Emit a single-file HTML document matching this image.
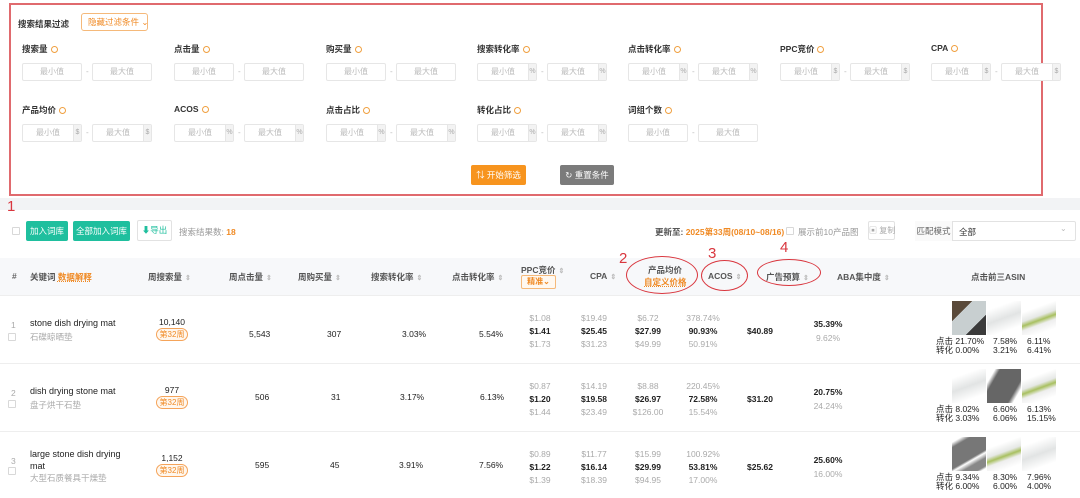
<!DOCTYPE html><html><head><meta charset="utf-8"><style>
*{margin:0;padding:0;box-sizing:border-box}
body{width:1080px;height:498px;overflow:hidden;background:#fff;font-family:"Liberation Sans","Noto Sans CJK SC",sans-serif;color:#333;position:relative;font-size:9px}
.a{position:absolute;white-space:nowrap}
.lbl{font-size:8.5px;color:#333;font-weight:bold}
.q{display:inline-block;width:7px;height:7px;border:1px solid #f0a040;border-radius:50%;margin-left:3px;vertical-align:-1px}
.in{position:absolute;width:60px;height:18px;border:1px solid #e6e6e6;border-radius:2px;color:#bbb;font-size:8px;line-height:16px;text-align:center;background:#fff}
.in.u{padding-right:8px}
.in .s{position:absolute;right:0;top:0;width:8px;height:16px;background:#f3f3f3;color:#aaa;font-size:7px;text-align:center;border-left:1px solid #e6e6e6}
.d{position:absolute;color:#bbb;font-size:8px}
.h{font-size:8.5px;color:#555;font-weight:bold}
.ar{display:inline-block;color:#bbb;font-size:7px;margin-left:3px}
.g{color:#aaa;font-size:8.5px}
.b{color:#222;font-size:8.5px;font-weight:bold}
.c{text-align:center;width:60px}
.tag{display:inline-block;border:1px solid #f5a45a;border-radius:7px;color:#f08a24;font-size:8px;padding:0 3px;line-height:11px;background:#fff7ee}
.ell{position:absolute;border:1.5px solid #d9363e;border-radius:50%}
.rn{position:absolute;color:#d9363e;font-size:15px;font-family:"Liberation Sans",sans-serif}
.cb{position:absolute;width:8px;height:8px;border:1px solid #d8d8d8;border-radius:1px;background:#fff}
.img{position:absolute;width:34px;height:34px}
</style></head><body>
<div class="a" style="left:0;top:0;width:1080px;height:205px;background:#fff"></div>
<div class="a" style="left:0;top:198px;width:1080px;height:12px;background:#f2f3f5"></div>
<div class="a" style="left:9px;top:3px;width:1034px;height:193px;border:2px solid #e06a6e"></div>
<div class="a lbl" style="left:18px;top:18px">搜索结果过滤</div>
<div class="a" style="left:81px;top:13px;width:67px;height:18px;border:1px solid #f5b97a;border-radius:3px;color:#f08a24;font-size:8.5px;line-height:16px;padding-left:6px">隐藏过滤条件 ⌄</div>

<div class="a lbl" style="left:22px;top:43px">搜索量<span class="q"></span></div>
<div class="a lbl" style="left:174px;top:43px">点击量<span class="q"></span></div>
<div class="a lbl" style="left:326px;top:43px">购买量<span class="q"></span></div>
<div class="a lbl" style="left:477px;top:43px">搜索转化率<span class="q"></span></div>
<div class="a lbl" style="left:628px;top:43px">点击转化率<span class="q"></span></div>
<div class="a lbl" style="left:780px;top:43px">PPC竞价<span class="q"></span></div>
<div class="a lbl" style="left:931px;top:43px">CPA<span class="q"></span></div>
<div class="in" style="left:22px;top:63px">最小值</div><div class="d" style="left:86px;top:67px">-</div><div class="in" style="left:92px;top:63px">最大值</div>
<div class="in" style="left:174px;top:63px">最小值</div><div class="d" style="left:238px;top:67px">-</div><div class="in" style="left:244px;top:63px">最大值</div>
<div class="in" style="left:326px;top:63px">最小值</div><div class="d" style="left:390px;top:67px">-</div><div class="in" style="left:396px;top:63px">最大值</div>
<div class="in u" style="left:477px;top:63px">最小值<span class="s">%</span></div><div class="d" style="left:541px;top:67px">-</div><div class="in u" style="left:547px;top:63px">最大值<span class="s">%</span></div>
<div class="in u" style="left:628px;top:63px">最小值<span class="s">%</span></div><div class="d" style="left:692px;top:67px">-</div><div class="in u" style="left:698px;top:63px">最大值<span class="s">%</span></div>
<div class="in u" style="left:780px;top:63px">最小值<span class="s">$</span></div><div class="d" style="left:844px;top:67px">-</div><div class="in u" style="left:850px;top:63px">最大值<span class="s">$</span></div>
<div class="in u" style="left:931px;top:63px">最小值<span class="s">$</span></div><div class="d" style="left:995px;top:67px">-</div><div class="in u" style="left:1001px;top:63px">最大值<span class="s">$</span></div>
<div class="a lbl" style="left:22px;top:104px">产品均价<span class="q"></span></div>
<div class="a lbl" style="left:174px;top:104px">ACOS<span class="q"></span></div>
<div class="a lbl" style="left:326px;top:104px">点击占比<span class="q"></span></div>
<div class="a lbl" style="left:477px;top:104px">转化占比<span class="q"></span></div>
<div class="a lbl" style="left:628px;top:104px">词组个数<span class="q"></span></div>
<div class="in u" style="left:22px;top:124px">最小值<span class="s">$</span></div><div class="d" style="left:86px;top:128px">-</div><div class="in u" style="left:92px;top:124px">最大值<span class="s">$</span></div>
<div class="in u" style="left:174px;top:124px">最小值<span class="s">%</span></div><div class="d" style="left:238px;top:128px">-</div><div class="in u" style="left:244px;top:124px">最大值<span class="s">%</span></div>
<div class="in u" style="left:326px;top:124px">最小值<span class="s">%</span></div><div class="d" style="left:390px;top:128px">-</div><div class="in u" style="left:396px;top:124px">最大值<span class="s">%</span></div>
<div class="in u" style="left:477px;top:124px">最小值<span class="s">%</span></div><div class="d" style="left:541px;top:128px">-</div><div class="in u" style="left:547px;top:124px">最大值<span class="s">%</span></div>
<div class="in" style="left:628px;top:124px">最小值</div><div class="d" style="left:692px;top:128px">-</div><div class="in" style="left:698px;top:124px">最大值</div>
<div class="a" style="left:471px;top:165px;width:55px;height:20px;background:#f7941e;border-radius:2px;color:#fff;font-size:8.5px;line-height:20px;text-align:center">⇅ 开始筛选</div>
<div class="a" style="left:560px;top:165px;width:54px;height:20px;background:#7b7b7b;border-radius:2px;color:#fff;font-size:8.5px;line-height:20px;text-align:center">↻ 重置条件</div>

<div class="rn" style="left:7px;top:198px">1</div>
<div class="cb" style="left:12px;top:227px"></div>
<div class="a" style="left:26px;top:221px;width:42px;height:20px;background:#1fbf9e;border-radius:2px;color:#fff;font-size:8.5px;line-height:20px;text-align:center">加入词库</div>
<div class="a" style="left:73px;top:221px;width:57px;height:20px;background:#1fbf9e;border-radius:2px;color:#fff;font-size:8.5px;line-height:20px;text-align:center">全部加入词库</div>
<div class="a" style="left:137px;top:220px;width:35px;height:21px;border:1px solid #e2e2e2;border-radius:2px;color:#1fbf9e;font-size:8.5px;line-height:19px;text-align:center">⬇导出</div>
<div class="a" style="left:179px;top:226px;font-size:8.5px;color:#999">搜索结果数: <b style="color:#f08a24">18</b></div>
<div class="a" style="left:655px;top:226px;font-size:8.5px;color:#555;font-weight:bold">更新至: <span style="color:#f08a24">2025第33周(08/10~08/16)</span></div>
<div class="cb" style="left:786px;top:227px"></div>
<div class="a" style="left:798px;top:226px;font-size:8.5px;color:#999">展示前10产品图</div>
<div class="a" style="left:868px;top:221px;width:27px;height:19px;border:1px solid #e2e2e2;border-radius:2px;color:#aaa;font-size:8px;line-height:17px;text-align:center">▣ 复制</div>
<div class="a" style="left:915px;top:221px;width:161px;height:20px;border:1px solid #e2e2e2;border-radius:2px"></div>
<div class="a" style="left:915px;top:221px;width:38px;height:20px;border-right:1px solid #e2e2e2;background:#fafafa;font-size:8.5px;color:#666;line-height:20px;text-align:center">匹配模式</div>
<div class="a" style="left:959px;top:226px;font-size:8.5px;color:#333">全部</div>
<div class="a" style="left:1060px;top:224px;font-size:8px;color:#bbb">⌄</div>

<div class="a" style="left:0;top:258px;width:1080px;height:38px;background:#f7f8fa;border-bottom:1px solid #eee"></div>
<div class="a h" style="left:12px;top:271px;color:#666">#</div>
<div class="a h" style="left:30px;top:271px">关键词 <span style="color:#f08a24;text-decoration:underline dotted">数据解释</span></div>
<div class="a h" style="left:148px;top:271px">周搜索量<span class="ar">⇕</span></div>
<div class="a h" style="left:229px;top:271px">周点击量<span class="ar">⇕</span></div>
<div class="a h" style="left:298px;top:271px">周购买量<span class="ar">⇕</span></div>
<div class="a h" style="left:371px;top:271px">搜索转化率<span class="ar">⇕</span></div>
<div class="a h" style="left:452px;top:271px">点击转化率<span class="ar">⇕</span></div>
<div class="a h" style="left:521px;top:264px">PPC竞价<span class="ar">⇕</span></div>
<div class="a" style="left:521px;top:275px;width:35px;height:14px;border:1px solid #f5b97a;border-radius:2px;color:#f08a24;font-size:8px;line-height:12px;text-align:center;background:#fff8f0;font-weight:bold">精准⌄</div>
<div class="a h" style="left:590px;top:271px">CPA<span class="ar">⇕</span></div>
<div class="a h" style="left:648px;top:264px">产品均价</div>
<div class="a h" style="left:644px;top:276px;color:#f08a24;text-decoration:underline dotted">自定义价格</div>
<div class="a h" style="left:708px;top:271px">ACOS<span class="ar">⇕</span></div>
<div class="a h" style="left:766px;top:271px">广告预算<span class="ar">⇕</span></div>
<div class="a h" style="left:837px;top:271px">ABA集中度<span class="ar">⇕</span></div>
<div class="a h" style="left:971px;top:271px">点击前三ASIN</div>
<div class="rn" style="left:619px;top:250px">2</div>
<div class="ell" style="left:626px;top:256px;width:72px;height:38px"></div>
<div class="rn" style="left:708px;top:245px">3</div>
<div class="ell" style="left:701px;top:260px;width:47px;height:31px"></div>
<div class="rn" style="left:780px;top:239px">4</div>
<div class="ell" style="left:757px;top:259px;width:64px;height:27px"></div>

<div class="a" style="left:0;top:363px;width:1080px;height:1px;background:#eee"></div>
<div class="a" style="left:0;top:431px;width:1080px;height:1px;background:#eee"></div>

<div class="a g" style="left:11px;top:320px">1</div><div class="cb" style="left:8px;top:333px"></div>
<div class="a" style="left:30px;top:318px;font-size:9px;color:#222">stone dish drying mat</div>
<div class="a g" style="left:30px;top:331px">石碟晾晒垫</div>
<div class="a c b" style="left:142px;top:317px;font-weight:normal">10,140</div>
<div class="a c" style="left:142px;top:328px"><span class="tag">第32周</span></div>
<div class="a b" style="left:249px;top:329px;font-weight:normal">5,543</div>
<div class="a b" style="left:327px;top:329px;font-weight:normal">307</div>
<div class="a b" style="left:402px;top:329px;font-weight:normal">3.03%</div>
<div class="a b" style="left:479px;top:329px;font-weight:normal">5.54%</div>
<div class="a c g" style="left:510px;top:313px">$1.08</div><div class="a c b" style="left:510px;top:326px">$1.41</div><div class="a c g" style="left:510px;top:339px">$1.73</div>
<div class="a c g" style="left:564px;top:313px">$19.49</div><div class="a c b" style="left:564px;top:326px">$25.45</div><div class="a c g" style="left:564px;top:339px">$31.23</div>
<div class="a c g" style="left:618px;top:313px">$6.72</div><div class="a c b" style="left:618px;top:326px">$27.99</div><div class="a c g" style="left:618px;top:339px">$49.99</div>
<div class="a c g" style="left:673px;top:313px">378.74%</div><div class="a c b" style="left:673px;top:326px">90.93%</div><div class="a c g" style="left:673px;top:339px">50.91%</div>
<div class="a c b" style="left:730px;top:326px">$40.89</div>
<div class="a c b" style="left:798px;top:319px">35.39%</div><div class="a c g" style="left:798px;top:333px">9.62%</div>

<div class="a g" style="left:11px;top:388px">2</div><div class="cb" style="left:8px;top:400px"></div>
<div class="a" style="left:30px;top:386px;font-size:9px;color:#222">dish drying stone mat</div>
<div class="a g" style="left:30px;top:399px">盘子烘干石垫</div>
<div class="a c b" style="left:142px;top:385px;font-weight:normal">977</div>
<div class="a c" style="left:142px;top:396px"><span class="tag">第32周</span></div>
<div class="a b" style="left:255px;top:392px;font-weight:normal">506</div>
<div class="a b" style="left:331px;top:392px;font-weight:normal">31</div>
<div class="a b" style="left:400px;top:392px;font-weight:normal">3.17%</div>
<div class="a b" style="left:480px;top:392px;font-weight:normal">6.13%</div>
<div class="a c g" style="left:510px;top:381px">$0.87</div><div class="a c b" style="left:510px;top:394px">$1.20</div><div class="a c g" style="left:510px;top:407px">$1.44</div>
<div class="a c g" style="left:564px;top:381px">$14.19</div><div class="a c b" style="left:564px;top:394px">$19.58</div><div class="a c g" style="left:564px;top:407px">$23.49</div>
<div class="a c g" style="left:618px;top:381px">$8.88</div><div class="a c b" style="left:618px;top:394px">$26.97</div><div class="a c g" style="left:618px;top:407px">$126.00</div>
<div class="a c g" style="left:673px;top:381px">220.45%</div><div class="a c b" style="left:673px;top:394px">72.58%</div><div class="a c g" style="left:673px;top:407px">15.54%</div>
<div class="a c b" style="left:730px;top:394px">$31.20</div>
<div class="a c b" style="left:798px;top:387px">20.75%</div><div class="a c g" style="left:798px;top:401px">24.24%</div>

<div class="a g" style="left:11px;top:456px">3</div><div class="cb" style="left:8px;top:467px"></div>
<div class="a" style="left:30px;top:448px;font-size:9px;color:#222;line-height:12px">large stone dish drying<br>mat</div>
<div class="a g" style="left:30px;top:472px">大型石质餐具干燥垫</div>
<div class="a c b" style="left:142px;top:453px;font-weight:normal">1,152</div>
<div class="a c" style="left:142px;top:464px"><span class="tag">第32周</span></div>
<div class="a b" style="left:255px;top:460px;font-weight:normal">595</div>
<div class="a b" style="left:330px;top:460px;font-weight:normal">45</div>
<div class="a b" style="left:399px;top:460px;font-weight:normal">3.91%</div>
<div class="a b" style="left:479px;top:460px;font-weight:normal">7.56%</div>
<div class="a c g" style="left:510px;top:449px">$0.89</div><div class="a c b" style="left:510px;top:462px">$1.22</div><div class="a c g" style="left:510px;top:475px">$1.39</div>
<div class="a c g" style="left:564px;top:449px">$11.77</div><div class="a c b" style="left:564px;top:462px">$16.14</div><div class="a c g" style="left:564px;top:475px">$18.39</div>
<div class="a c g" style="left:618px;top:449px">$15.99</div><div class="a c b" style="left:618px;top:462px">$29.99</div><div class="a c g" style="left:618px;top:475px">$94.95</div>
<div class="a c g" style="left:673px;top:449px">100.92%</div><div class="a c b" style="left:673px;top:462px">53.81%</div><div class="a c g" style="left:673px;top:475px">17.00%</div>
<div class="a c b" style="left:730px;top:462px">$25.62</div>
<div class="a c b" style="left:798px;top:455px">25.60%</div><div class="a c g" style="left:798px;top:469px">16.00%</div>

<div class="img" style="left:952px;top:301px;background:linear-gradient(135deg,#5a4a3a 0 30%,#c8cfd0 30% 70%,#3a3a3a 70%)"></div>
<div class="img" style="left:987px;top:301px;background:linear-gradient(160deg,#fff 20%,#e2e4e4 50%,#fff 80%)"></div>
<div class="img" style="left:1022px;top:301px;background:linear-gradient(160deg,#fff 25%,#e6e8e6 45%,#a8c060 55%,#eee 65%,#fff 85%)"></div>
<div class="img" style="left:952px;top:369px;background:linear-gradient(160deg,#fff 20%,#e2e4e4 50%,#fff 80%)"></div>
<div class="img" style="left:987px;top:369px;background:linear-gradient(120deg,#fff 15%,#666 25% 75%,#fff 85%)"></div>
<div class="img" style="left:1022px;top:369px;background:linear-gradient(160deg,#fff 25%,#e6e8e6 45%,#a8c060 55%,#eee 65%,#fff 85%)"></div>
<div class="img" style="left:952px;top:437px;background:linear-gradient(150deg,#fff 10%,#777 20% 60%,#fff 65%,#888 75% 90%,#fff 95%)"></div>
<div class="img" style="left:987px;top:437px;background:linear-gradient(160deg,#fff 25%,#e6e8e6 45%,#a8c060 55%,#eee 65%,#fff 85%)"></div>
<div class="img" style="left:1022px;top:437px;background:linear-gradient(160deg,#fff 20%,#e2e4e4 50%,#fff 80%)"></div>
<div class="a" style="left:936px;top:337px;font-size:8.5px;color:#222;line-height:9px">点击 21.70%<br>转化 0.00%</div>
<div class="a" style="left:993px;top:337px;font-size:8.5px;color:#222;line-height:9px">7.58%<br>3.21%</div>
<div class="a" style="left:1027px;top:337px;font-size:8.5px;color:#222;line-height:9px">6.11%<br>6.41%</div>
<div class="a" style="left:936px;top:405px;font-size:8.5px;color:#222;line-height:9px">点击 8.02%<br>转化 3.03%</div>
<div class="a" style="left:993px;top:405px;font-size:8.5px;color:#222;line-height:9px">6.60%<br>6.06%</div>
<div class="a" style="left:1027px;top:405px;font-size:8.5px;color:#222;line-height:9px">6.13%<br>15.15%</div>
<div class="a" style="left:936px;top:473px;font-size:8.5px;color:#222;line-height:9px">点击 9.34%<br>转化 6.00%</div>
<div class="a" style="left:993px;top:473px;font-size:8.5px;color:#222;line-height:9px">8.30%<br>6.00%</div>
<div class="a" style="left:1027px;top:473px;font-size:8.5px;color:#222;line-height:9px">7.96%<br>4.00%</div>
</body></html>
